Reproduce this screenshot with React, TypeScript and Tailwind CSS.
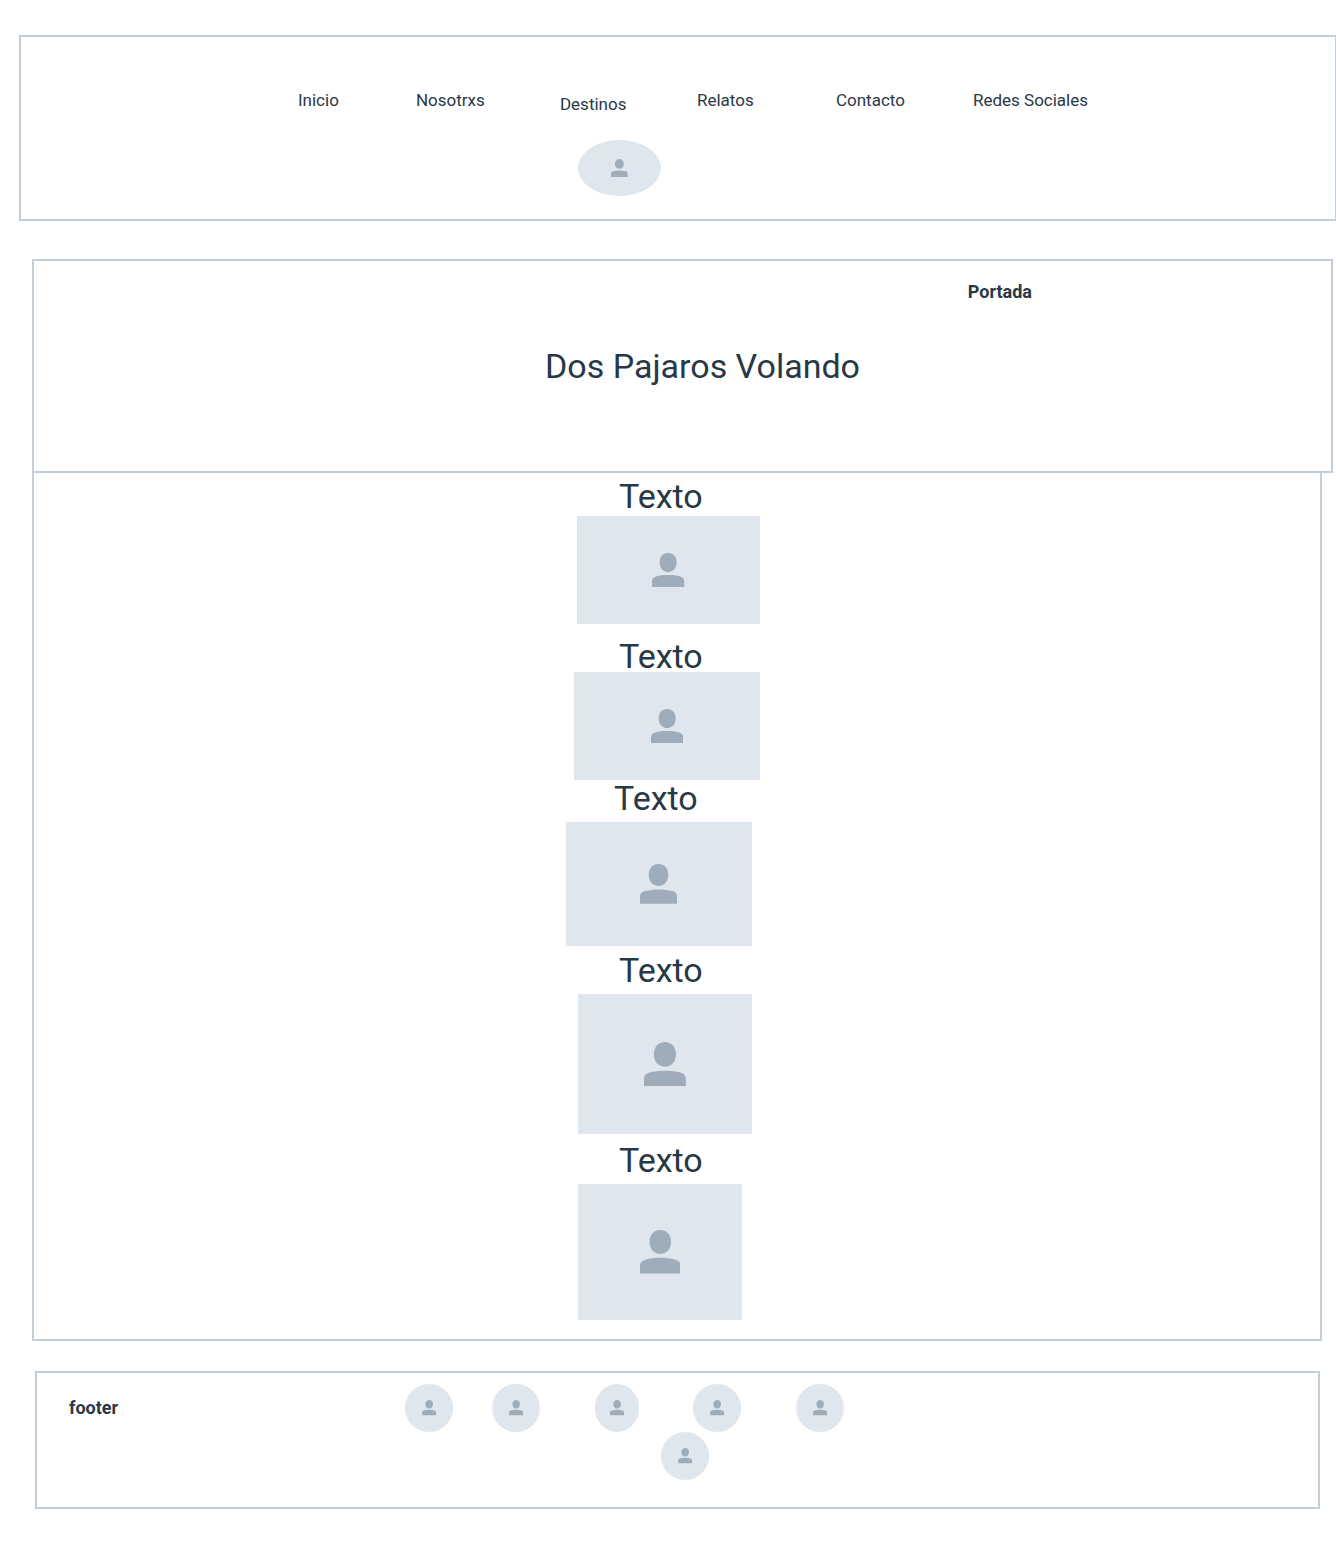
import React from "react";

function Person() {
  return (
    <svg viewBox="0 0 42 45" className="h-[32%] fill-[#9eadb9]" aria-hidden="true">
      <path d="M21 0C27.500 0 32 5 32 11.500V13C32 19.800 27.300 24.800 21 24.800C14.700 24.800 10 19.800 10 13V11.500C10 5 14.500 0 21 0Z" />
      <path d="M0 45V37C0 33.600 1.800 31.700 5.500 30.700C10 29.400 15 28.800 21 28.800C27 28.800 32 29.400 36.500 30.700C40.200 31.700 42 33.600 42 37V45Z" />
    </svg>
  );
}

function Picture({ className, label }: { className: string; label: string }) {
  return (
    <div
      role="img"
      aria-label={label}
      className={`flex items-center justify-center bg-[#dfe6ee] ${className}`}
    >
      <Person />
    </div>
  );
}

const links = [
  { label: "Inicio", href: "#inicio" },
  { label: "Nosotrxs", href: "#nosotrxs" },
  { label: "Destinos", href: "#destinos" },
  { label: "Relatos", href: "#relatos" },
  { label: "Contacto", href: "#contacto" },
  { label: "Redes Sociales", href: "#redes" },
];

const entries = [
  { item: "pt-[7px]", title: "ml-[53px] mb-1", picture: "ml-[11px] h-[108px] w-[183px]" },
  { item: "pt-4", title: "ml-[53px]", picture: "ml-2 h-[108px] w-[186px]" },
  { item: "pt-0.5", title: "ml-12 mb-2", picture: "h-[124px] w-[186px]" },
  { item: "pt-2", title: "ml-[53px] mb-2", picture: "ml-3 h-[140px] w-[174px]" },
  { item: "pt-2.5", title: "ml-[53px] mb-2", picture: "ml-3 h-[136px] w-[164px]" },
];

const social = [
  "w-12",
  "ml-[39px] w-12",
  "ml-[55px] w-11",
  "ml-[54px] w-12",
  "ml-[55px] w-12",
];

export default function App() {
  return (
    <div className="overflow-x-hidden bg-white pt-[35px] pb-9 font-['Roboto',sans-serif] text-[#293845]">
      <header className="ml-[19px] flex justify-center border-2 border-r border-[#c2ced9] pt-[51px] pb-[23px] pl-[30px]">
        <nav aria-label="Principal">
          <ul className="grid grid-cols-[118px_144px_137px_139px_137px_auto] text-[17px] leading-6">
            {links.map(({ label, href }) => (
              <li key={label} className={label === "Destinos" ? "mt-1" : ""}>
                <a href={href} className="whitespace-nowrap">
                  {label}
                </a>
                {label === "Destinos" && (
                  <Picture
                    label="Logo"
                    className="mt-6 ml-[18px] h-14 w-[83px] rounded-[50%]"
                  />
                )}
              </li>
            ))}
          </ul>
        </nav>
      </header>

      <main className="mt-[38px] ml-8">
        <section className="mr-[3px] border-2 border-[#c2ced9] pt-[19px] pb-[83px]">
          <p className="pr-[299px] text-right text-lg leading-6 font-bold">Portada</p>
          <h1 className="mt-10 pl-10 text-center text-[34px] leading-11">
            Dos Pajaros Volando
          </h1>
        </section>

        <section className="mr-3.5 flex justify-center border-2 border-t-0 border-[#c2ced9] pr-7 pb-[19px]">
          <div className="w-[194px]">
            {entries.map(({ item, title, picture }, index) => (
              <article key={index} className={item}>
                <h2 className={`text-[34px] leading-8 ${title}`}>Texto</h2>
                <Picture label="Imagen" className={picture} />
              </article>
            ))}
          </div>
        </section>
      </main>

      <footer className="mt-[30px] mr-4 ml-[35px] flex border-2 border-[#c2ced9] pt-[11px] pr-[138px] pb-[27px] pl-8">
        <p className="mt-3 flex-1 text-lg leading-6 font-bold">footer</p>
        <div>
          <div className="flex">
            {social.map((size, index) => (
              <Picture
                key={index}
                label="Red social"
                className={`h-12 rounded-[50%] ${size}`}
              />
            ))}
          </div>
          <Picture label="Red social" className="ml-64 h-12 w-12 rounded-[50%]" />
        </div>
        <div className="flex-1" />
      </footer>
    </div>
  );
}
